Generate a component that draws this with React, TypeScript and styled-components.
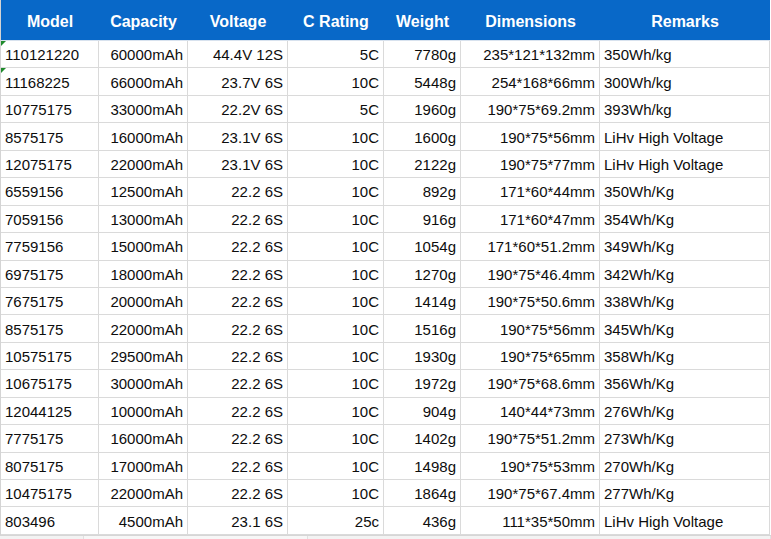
import React from "react";
import styled, { createGlobalStyle } from "styled-components";

const Global = createGlobalStyle`
  html, body { margin: 0; padding: 0; background: #ffffff; }
  body { font-family: "Liberation Sans", Arial, Helvetica, sans-serif; }
`;

const Page = styled.div`
  width: 771px;
  height: 539px;
  overflow: hidden;
  display: flex;
  flex-direction: column;
  background: #ffffff;
`;

const Grid = styled.div`
  display: grid;
  grid-template-columns: 98px 89px 100px 96px 77px 139px 170px;
  grid-template-rows: 41px repeat(18, 27.44px);
  border-left: 1px solid #d4d4d4;
  box-sizing: border-box;
  width: 770px;
`;

const HeadCell = styled.div`
  background: #0868c8;
  color: #ffffff;
  font-weight: 700;
  font-size: 16px;
  display: flex;
  align-items: center;
  justify-content: center;
  padding-top: 3px;
  border-bottom: 1px solid #d8e2ee;
  box-sizing: border-box;
`;

const Cell = styled.div<{ $align: "left" | "right" }>`
  position: relative;
  display: flex;
  align-items: center;
  justify-content: ${(p) => (p.$align === "left" ? "flex-start" : "flex-end")};
  padding: 1px 4px 0 4px;
  font-size: 15px;
  color: #0d0d0d;
  border-right: 1px solid #dadada;
  border-bottom: 1px solid #dadada;
  box-sizing: border-box;
  white-space: nowrap;
`;

const Flag = styled.span`
  position: absolute;
  left: 0;
  top: 0;
  width: 0;
  height: 0;
  border-top: 5px solid #1f8a2c;
  border-right: 5px solid transparent;
`;

const Bottom = styled.div`
  flex: 1;
  display: flex;
  border-top: 1px solid #d6d6d6;
  background: #f1f1f1;
`;

const Seg = styled.div<{ $w: string; $bg: string }>`
  width: ${(p) => p.$w};
  background: ${(p) => p.$bg};
  border-right: 1px solid #e0e0e0;
`;

const headers = ["Model", "Capacity", "Voltage", "C Rating", "Weight", "Dimensions", "Remarks"];
const aligns: ("left" | "right")[] = ["left", "right", "right", "right", "right", "right", "left"];

const rows: string[][] = [
  ["110121220", "60000mAh", "44.4V 12S", "5C", "7780g", "235*121*132mm", "350Wh/kg"],
  ["11168225", "66000mAh", "23.7V 6S", "10C", "5448g", "254*168*66mm", "300Wh/kg"],
  ["10775175", "33000mAh", "22.2V 6S", "5C", "1960g", "190*75*69.2mm", "393Wh/kg"],
  ["8575175", "16000mAh", "23.1V 6S", "10C", "1600g", "190*75*56mm", "LiHv High Voltage"],
  ["12075175", "22000mAh", "23.1V 6S", "10C", "2122g", "190*75*77mm", "LiHv High Voltage"],
  ["6559156", "12500mAh", "22.2 6S", "10C", "892g", "171*60*44mm", "350Wh/Kg"],
  ["7059156", "13000mAh", "22.2 6S", "10C", "916g", "171*60*47mm", "354Wh/Kg"],
  ["7759156", "15000mAh", "22.2 6S", "10C", "1054g", "171*60*51.2mm", "349Wh/Kg"],
  ["6975175", "18000mAh", "22.2 6S", "10C", "1270g", "190*75*46.4mm", "342Wh/Kg"],
  ["7675175", "20000mAh", "22.2 6S", "10C", "1414g", "190*75*50.6mm", "338Wh/Kg"],
  ["8575175", "22000mAh", "22.2 6S", "10C", "1516g", "190*75*56mm", "345Wh/Kg"],
  ["10575175", "29500mAh", "22.2 6S", "10C", "1930g", "190*75*65mm", "358Wh/Kg"],
  ["10675175", "30000mAh", "22.2 6S", "10C", "1972g", "190*75*68.6mm", "356Wh/Kg"],
  ["12044125", "10000mAh", "22.2 6S", "10C", "904g", "140*44*73mm", "276Wh/Kg"],
  ["7775175", "16000mAh", "22.2 6S", "10C", "1402g", "190*75*51.2mm", "273Wh/Kg"],
  ["8075175", "17000mAh", "22.2 6S", "10C", "1498g", "190*75*53mm", "270Wh/Kg"],
  ["10475175", "22000mAh", "22.2 6S", "10C", "1864g", "190*75*67.4mm", "277Wh/Kg"],
  ["803496", "4500mAh", "23.1 6S", "25c", "436g", "111*35*50mm", "LiHv High Voltage"],
];

export default function App() {
  return (
    <Page>
      <Global />
      <Grid>
        {headers.map((h) => (
          <HeadCell key={h}>{h}</HeadCell>
        ))}
        {rows.map((r, ri) =>
          r.map((v, ci) => (
            <Cell key={`${ri}-${ci}`} $align={aligns[ci]}>
              {ci === 0 && ri < 2 && <Flag />}
              {v}
            </Cell>
          ))
        )}
      </Grid>
      <Bottom>
        <Seg $w="83px" $bg="#f3f3f3" />
        <Seg $w="224px" $bg="#f7f7f7" />
        <Seg $w="464px" $bg="#f3f3f3" />
      </Bottom>
    </Page>
  );
}
